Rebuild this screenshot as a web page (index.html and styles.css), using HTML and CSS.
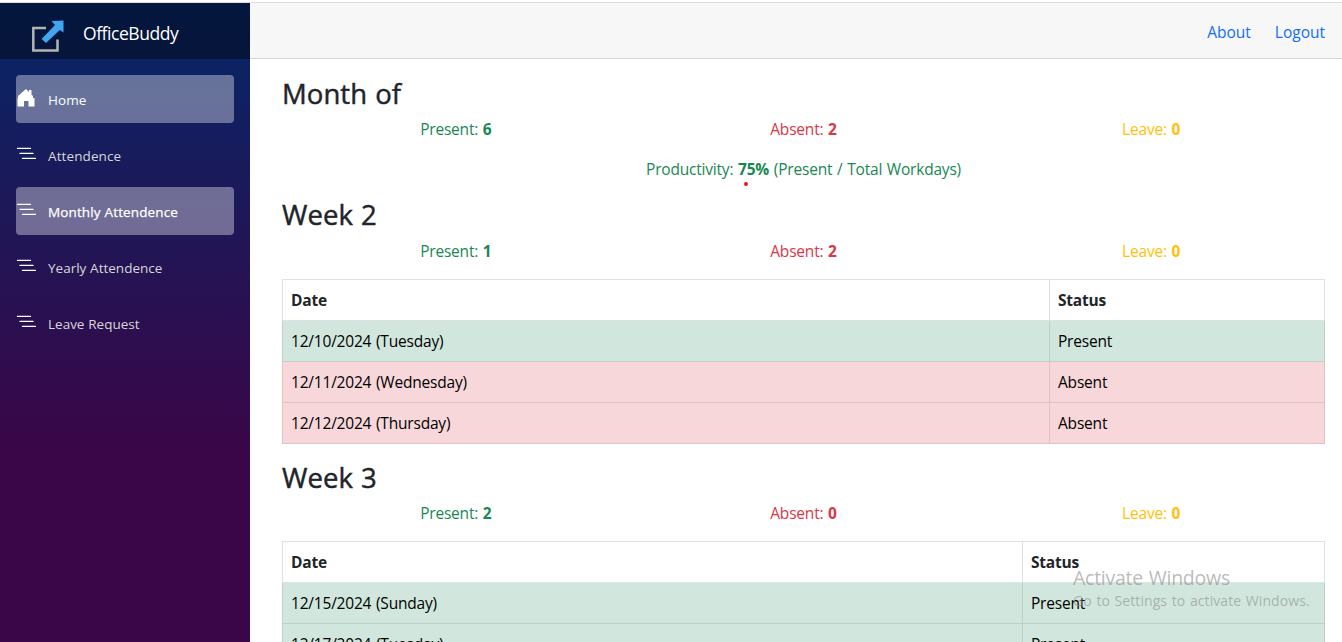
FILE: index.html
```html
<!DOCTYPE html>
<html lang="en">
<head>
<meta charset="utf-8">
<title>OfficeBuddy</title>
<link rel="stylesheet" href="styles.css">
</head>
<body>
<svg class="defs" width="0" height="0">
  <symbol id="nested" viewBox="0 0 20 20"><path d="M1.500 4.400h13M4 9.400h13M6.500 14.400h13" fill="none" stroke="#fff" stroke-width="1.300" stroke-linecap="round"/></symbol>
</svg>
<div class="page">
  <aside class="sidebar">
    <div class="brand">
      <svg class="logo" width="34" height="34" viewBox="0 0 34 34"><path d="M15 9H2.300V31.500H26.500V20.500" fill="none" stroke="#b4b4b0" stroke-width="2.500"/><path d="M20.500 2L32.500 1.500V13.500L28.800 11L15 24L10.600 20.100L24 6Z" fill="#42a5ef"/></svg>
      <span class="brand-name">OfficeBuddy</span>
    </div>
    <nav class="nav">
      <a class="item active"><svg class="icon" width="20" height="20" viewBox="0 0 20 20"><path d="M10 1L13 4V2H15.500V6.500L17 8V10H18.500V18.500H12.500V13H8V18.500H1.500V10H2V8Z" fill="#fff"/></svg><span class="home">Home</span></a>
      <a class="item"><svg class="icon" width="20" height="20"><use href="#nested"/></svg><span class="home">Attendence</span></a>
      <a class="item active current"><svg class="icon" width="20" height="20"><use href="#nested"/></svg><span>Monthly Attendence</span></a>
      <a class="item"><svg class="icon" width="20" height="20"><use href="#nested"/></svg><span>Yearly Attendence</span></a>
      <a class="item"><svg class="icon" width="20" height="20"><use href="#nested"/></svg><span>Leave Request</span></a>
    </nav>
  </aside>
  <main class="main">
    <header class="top"><a>About</a><a>Logout</a></header>
    <article class="content">
      <section class="month">
        <h2>Month of</h2>
        <div class="stats"><span class="ok">Present: <b>6</b></span><span class="bad">Absent: <b>2</b></span><span class="warn">Leave: <b>0</b></span></div>
        <p class="productivity ok">Productivity: <b>75%</b> (Present / Total Workdays)<i class="dot"></i></p>
      </section>
      <section class="week">
        <h2>Week 2</h2>
        <div class="stats"><span class="ok">Present: <b>1</b></span><span class="bad">Absent: <b>2</b></span><span class="warn">Leave: <b>0</b></span></div>
        <table class="log">
          <colgroup><col class="date-a"><col></colgroup>
          <tr><th>Date</th><th>Status</th></tr>
          <tr class="present"><td>12/10/2024 (Tuesday)</td><td>Present</td></tr>
          <tr class="absent"><td>12/11/2024 (Wednesday)</td><td>Absent</td></tr>
          <tr class="absent"><td>12/12/2024 (Thursday)</td><td>Absent</td></tr>
        </table>
      </section>
      <section class="week">
        <h2>Week 3</h2>
        <div class="stats"><span class="ok">Present: <b>2</b></span><span class="bad">Absent: <b>0</b></span><span class="warn">Leave: <b>0</b></span></div>
        <table class="log">
          <colgroup><col class="date-b"><col></colgroup>
          <tr><th>Date</th><th>Status</th></tr>
          <tr class="present"><td>12/15/2024 (Sunday)</td><td>Present</td></tr>
          <tr class="present"><td>12/17/2024 (Tuesday)</td><td>Present</td></tr>
        </table>
      </section>
    </article>
  </main>
</div>
<div class="watermark"><div class="wm-title">Activate Windows</div><div class="wm-text">Go to Settings to activate Windows.</div></div>
</body>
</html>
```
FILE: styles.css
```css
* { box-sizing: border-box; }
html, body { margin: 0; height: 100%; overflow: hidden; }
body {
  font: 15.5px/24px "Segoe UI", "Open Sans", "Noto Sans", sans-serif;
  letter-spacing: -0.2px;
  word-spacing: 0.9px;
  color: #212529;
  background: #fff;
  padding-top: 2px;
}
.defs { display: none; }
.page { display: flex; height: 640px; border-top: 1px solid #dedede; }
.sidebar {
  width: 250px;
  height: 639px;
  flex: none;
  background: linear-gradient(180deg, #052767 0%, #3a0647 70%);
}
.brand { display: flex; height: 56px; padding-left: 31px; background: rgba(0, 0, 0, .4); color: #fff; }
.logo { margin-top: 16px; }
.brand-name { margin-left: 18px; font-size: 17.5px; line-height: 27px; padding-top: 17px; letter-spacing: -0.45px; }
.nav { display: flex; flex-direction: column; gap: 8px; padding: 16px; word-spacing: 0.3px; }
.item {
  display: flex;
  height: 48px;
  border-radius: 4px;
  color: #d7d7d7;
  font-size: 13.5px;
  line-height: 48px;
  padding-top: 1px;
  letter-spacing: 0;
}
.item.active { background: rgba(255, 255, 255, .37); color: #fff; }
.item.current { letter-spacing: 0.12px; -webkit-text-stroke: 0.25px #fff; }
.home { letter-spacing: 0.1px; }
.icon { margin: 12px 12px 0 0; flex: none; }
.main { flex: 1; }
.top {
  height: 56px;
  display: flex;
  justify-content: flex-end;
  gap: 24px;
  padding: 17px 17px 0 0;
  background: #f7f7f7;
  border-bottom: 1px solid #d6d5d5;
  color: #0d6efd;
  letter-spacing: 0;
}
.content { padding: 17px 17px 0 32px; }
h2 {
  margin: 0 0 6px;
  font-size: 27.5px;
  line-height: 35.4px;
  font-weight: 500;
  letter-spacing: 0.05px;
  -webkit-text-stroke: 0.45px #212529;
}
.stats { display: grid; grid-template-columns: repeat(3, 1fr); text-align: center; margin-bottom: 16px; }
.ok { color: #198754; }
.bad { color: #dc3545; }
.warn { color: #ffc107; }
.productivity { position: relative; margin: 0 0 16px; text-align: center; }
.dot { position: absolute; left: 462px; top: 25px; width: 4px; height: 4px; border-radius: 2px; background: #e11b22; }
.log { width: 100%; table-layout: fixed; border-collapse: collapse; margin-bottom: 16px; }
.date-a { width: 767px; }
.date-b { width: 740px; }
th, td { height: 41px; padding: 8px; border: 1px solid #dee2e6; text-align: left; }
.present td { background: #d1e7dd; border-color: #bcd0c7; color: #000; }
.absent td { background: #f8d7da; border-color: #dfc2c4; color: #000; }
.watermark { position: absolute; left: 1073px; top: 565px; color: rgba(140, 140, 140, .6); }
.wm-title { font-size: 19.5px; line-height: 26px; letter-spacing: -0.25px; }
.wm-text { font-size: 14px; line-height: 20px; letter-spacing: 0.08px; }
```
